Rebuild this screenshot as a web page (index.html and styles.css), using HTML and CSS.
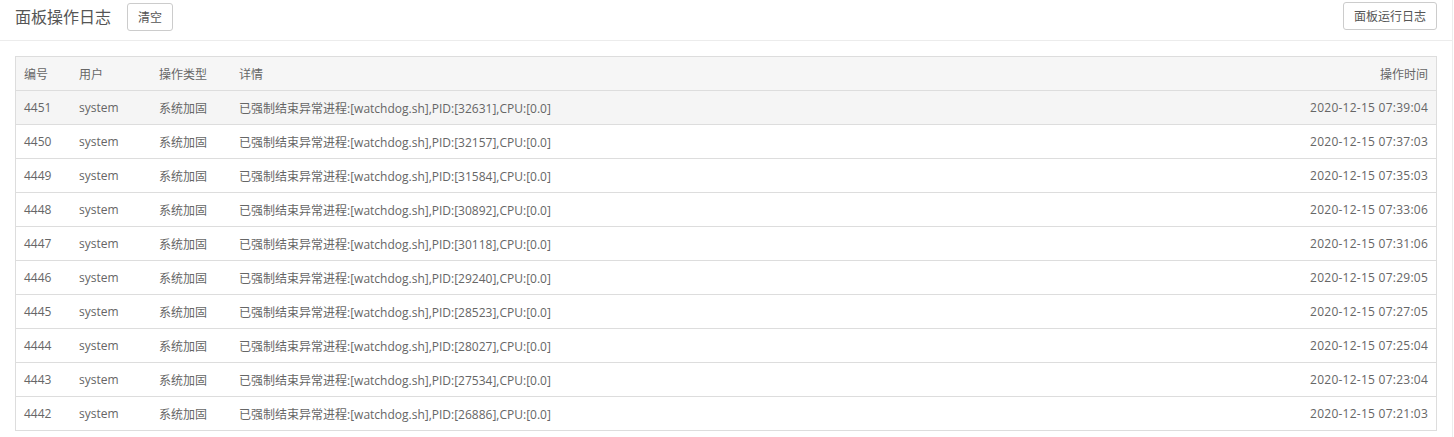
FILE: index.html
```html
<!DOCTYPE html>
<html lang="zh-CN">
<head>
<meta charset="utf-8">
<title>面板操作日志</title>
<link rel="stylesheet" href="styles.css">
</head>
<body>
<div class="page">
  <div class="topbar">
    <div class="left">
      <span class="title">面板操作日志</span>
      <button class="btn btn-clear">清空</button>
    </div>
    <button class="btn btn-run">面板运行日志</button>
  </div>
  <div class="content">
    <table class="log">
      <thead>
        <tr><th class="c-id">编号</th><th class="c-user">用户</th><th class="c-type">操作类型</th><th>详情</th><th class="c-time">操作时间</th></tr>
      </thead>
      <tbody>
        <tr class="hover"><td>4451</td><td>system</td><td>系统加固</td><td>已强制结束异常进程:[watchdog.sh],PID:[32631],CPU:[0.0]</td><td class="c-time">2020-12-15 07:39:04</td></tr>
        <tr><td>4450</td><td>system</td><td>系统加固</td><td>已强制结束异常进程:[watchdog.sh],PID:[32157],CPU:[0.0]</td><td class="c-time">2020-12-15 07:37:03</td></tr>
        <tr><td>4449</td><td>system</td><td>系统加固</td><td>已强制结束异常进程:[watchdog.sh],PID:[31584],CPU:[0.0]</td><td class="c-time">2020-12-15 07:35:03</td></tr>
        <tr><td>4448</td><td>system</td><td>系统加固</td><td>已强制结束异常进程:[watchdog.sh],PID:[30892],CPU:[0.0]</td><td class="c-time">2020-12-15 07:33:06</td></tr>
        <tr><td>4447</td><td>system</td><td>系统加固</td><td>已强制结束异常进程:[watchdog.sh],PID:[30118],CPU:[0.0]</td><td class="c-time">2020-12-15 07:31:06</td></tr>
        <tr><td>4446</td><td>system</td><td>系统加固</td><td>已强制结束异常进程:[watchdog.sh],PID:[29240],CPU:[0.0]</td><td class="c-time">2020-12-15 07:29:05</td></tr>
        <tr><td>4445</td><td>system</td><td>系统加固</td><td>已强制结束异常进程:[watchdog.sh],PID:[28523],CPU:[0.0]</td><td class="c-time">2020-12-15 07:27:05</td></tr>
        <tr><td>4444</td><td>system</td><td>系统加固</td><td>已强制结束异常进程:[watchdog.sh],PID:[28027],CPU:[0.0]</td><td class="c-time">2020-12-15 07:25:04</td></tr>
        <tr><td>4443</td><td>system</td><td>系统加固</td><td>已强制结束异常进程:[watchdog.sh],PID:[27534],CPU:[0.0]</td><td class="c-time">2020-12-15 07:23:04</td></tr>
        <tr><td>4442</td><td>system</td><td>系统加固</td><td>已强制结束异常进程:[watchdog.sh],PID:[26886],CPU:[0.0]</td><td class="c-time">2020-12-15 07:21:03</td></tr>
      </tbody>
    </table>
  </div>
</div>
</body>
</html>
```
FILE: styles.css
```css
html, body {
  margin: 0;
  padding: 0;
  background: #fff;
}
body {
  font-family: "Open Sans", "Noto Sans CJK SC", sans-serif;
  font-size: 12px;
  color: #666;
}
.page {
  width: 1453px;
  height: 437px;
  border-right: 1px solid #ececec;
  box-sizing: border-box;
}
.topbar {
  height: 40px;
  border-bottom: 1px solid #ececec;
  display: flex;
  align-items: flex-start;
  justify-content: space-between;
  padding: 0 15px 0 15px;
}
.left {
  display: flex;
  align-items: flex-start;
}
.title {
  font-size: 16px;
  color: #555;
  line-height: 34px;
  margin-right: 16px;
}
.btn {
  font-family: "Open Sans", "Noto Sans CJK SC", sans-serif;
  font-size: 12px;
  color: #555;
  background: #fff;
  border: 1px solid #ccc;
  border-radius: 3px;
  height: 28px;
  padding: 0 10px;
  cursor: pointer;
}
.btn-clear {
  margin-top: 3px;
  width: 46px;
}
.btn-run {
  margin-top: 2px;
  width: 94px;
  padding: 0;
}
.content {
  padding: 15px 15px 0 15px;
}
.log {
  width: 100%;
  border-collapse: collapse;
  border: 1px solid #ddd;
}
.log th, .log td {
  height: 33px;
  padding: 0 8px;
  text-align: left;
  font-weight: normal;
  border-bottom: 1px solid #ddd;
  white-space: nowrap;
  color: #666;
}
.log thead tr {
  background: #f6f6f6;
}
.log tr.hover {
  background: #f5f5f5;
}
.log .c-id { width: 39px; }
.log .c-user { width: 64px; }
.log .c-type { width: 64px; }
.log .c-time { text-align: right; }
.log td.c-time { letter-spacing: 0.25px; }
```
